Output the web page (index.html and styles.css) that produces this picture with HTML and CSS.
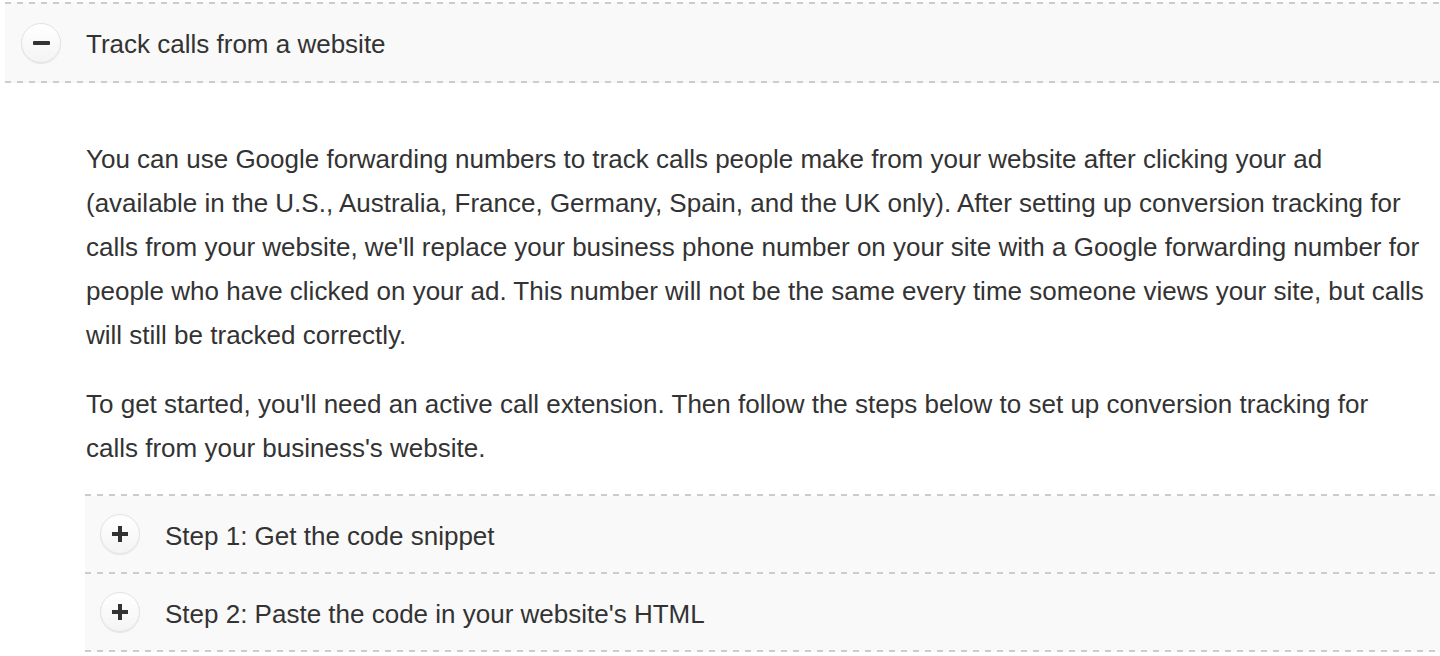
FILE: index.html
```html
<!DOCTYPE html>
<html lang="en">
<head>
<meta charset="utf-8">
<title>Track calls from a website</title>
<link rel="stylesheet" href="styles.css">
</head>
<body>
<div class="accordion">
  <div class="acc-head">
    <span class="toggle"><span class="minus"></span></span>
    <span class="acc-title">Track calls from a website</span>
  </div>
  <div class="acc-body">
    <p class="para">You can use Google forwarding numbers to track calls people make from your website after clicking your ad (available in the U.S., Australia, France, Germany, Spain, and the UK only). After setting up conversion tracking for calls from your website, we'll replace your business phone number on your site with a Google forwarding number for people who have clicked on your ad. This number will not be the same every time someone views your site, but calls will still be tracked correctly.</p>
    <p class="para">To get started, you'll need an active call extension. Then follow the steps below to set up conversion tracking for calls from your business's website.</p>
    <div class="steps">
      <div class="step">
        <span class="toggle"><span class="plus"></span></span>
        <span class="step-title">Step 1: Get the code snippet</span>
      </div>
      <div class="step">
        <span class="toggle"><span class="plus"></span></span>
        <span class="step-title">Step 2: Paste the code in your website's HTML</span>
      </div>
    </div>
  </div>
</div>
</body>
</html>
```

FILE: styles.css
```css
html, body {
  margin: 0;
  padding: 0;
  background: #fff;
}
body {
  font-family: "Liberation Sans", Arial, Helvetica, sans-serif;
  color: #333;
  overflow: hidden;
  padding-top: 2px;
}
.accordion {
  margin-left: 5px;
}
.acc-head {
  display: flex;
  align-items: center;
  box-sizing: border-box;
  height: 81px;
  padding: 2px 0 2px 16px;
  background:
    repeating-linear-gradient(to right, #ccc 0 6px, transparent 6px 12px) top left / 100% 2px no-repeat,
    repeating-linear-gradient(to right, #ccc 0 6px, transparent 6px 12px) bottom left / 100% 2px no-repeat,
    #f9f9f9;
}
.toggle {
  flex: none;
  width: 38px;
  height: 38px;
  border-radius: 50%;
  border: 1px solid #e2e2e2;
  background: linear-gradient(#ffffff, #f4f4f4);
  box-shadow: 0 1px 1px rgba(0, 0, 0, 0.08);
  display: flex;
  align-items: center;
  justify-content: center;
}
.minus {
  width: 17px;
  height: 4px;
  background: #333;
  border-radius: 1px;
}
.plus {
  width: 16px;
  height: 16px;
  background:
    linear-gradient(#333, #333) center / 16px 4px no-repeat,
    linear-gradient(#333, #333) center / 4px 16px no-repeat;
}
.acc-title {
  margin-left: 25px;
  font-size: 26px;
  padding-top: 4px;
}
.acc-body {
  padding: 54px 0 0 80px;
}
.para {
  margin: 0 0 0 1px;
  font-size: 26px;
  line-height: 44px;
  max-width: 1339px;
}
.para + .para {
  margin-top: 25px;
}
.steps {
  margin-top: 24px;
  padding-top: 2px;
  background: repeating-linear-gradient(to right, #ccc 0 6px, transparent 6px 12px) top left / 100% 2px no-repeat;
}
.step {
  display: flex;
  align-items: center;
  box-sizing: border-box;
  height: 78px;
  padding: 0 0 2px 15px;
  background:
    repeating-linear-gradient(to right, #ccc 0 6px, transparent 6px 12px) bottom left / 100% 2px no-repeat,
    #f9f9f9;
}
.step-title {
  margin-left: 25px;
  font-size: 26px;
  padding-top: 4px;
}
```
